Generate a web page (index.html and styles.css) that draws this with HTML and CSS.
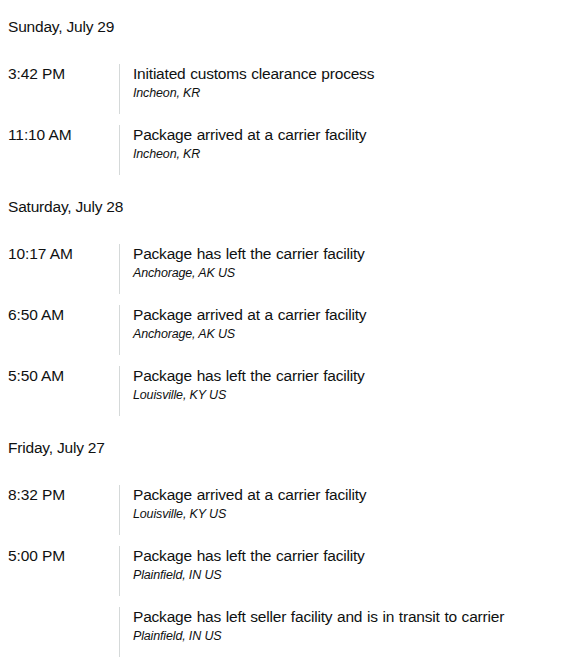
FILE: index.html
```html
<!DOCTYPE html>
<html>
<head>
<meta charset="utf-8">
<link rel="stylesheet" href="styles.css">
</head>
<body>
<div class="tracking">
  <section class="day">
    <h3 class="day-title">Sunday, July 29</h3>
    <div class="events">
      <div class="time">3:42 PM</div>
      <div class="event"><div class="desc">Initiated customs clearance process</div><div class="loc">Incheon, KR</div></div>
      <div class="time">11:10 AM</div>
      <div class="event"><div class="desc">Package arrived at a carrier facility</div><div class="loc">Incheon, KR</div></div>
    </div>
  </section>
  <section class="day">
    <h3 class="day-title">Saturday, July 28</h3>
    <div class="events">
      <div class="time">10:17 AM</div>
      <div class="event"><div class="desc">Package has left the carrier facility</div><div class="loc">Anchorage, AK US</div></div>
      <div class="time">6:50 AM</div>
      <div class="event"><div class="desc">Package arrived at a carrier facility</div><div class="loc">Anchorage, AK US</div></div>
      <div class="time">5:50 AM</div>
      <div class="event"><div class="desc">Package has left the carrier facility</div><div class="loc">Louisville, KY US</div></div>
    </div>
  </section>
  <section class="day">
    <h3 class="day-title">Friday, July 27</h3>
    <div class="events">
      <div class="time">8:32 PM</div>
      <div class="event"><div class="desc">Package arrived at a carrier facility</div><div class="loc">Louisville, KY US</div></div>
      <div class="time">5:00 PM</div>
      <div class="event"><div class="desc">Package has left the carrier facility</div><div class="loc">Plainfield, IN US</div></div>
      <div class="time"></div>
      <div class="event"><div class="desc">Package has left seller facility and is in transit to carrier</div><div class="loc">Plainfield, IN US</div></div>
    </div>
  </section>
</div>
</body>
</html>
```

FILE: styles.css
```css
html, body {
  margin: 0;
  padding: 0;
  background: #ffffff;
}
body {
  font-family: "Liberation Sans", Arial, sans-serif;
  color: #0f1111;
}
.tracking {
  padding: 17px 8px 0 8px;
}
.day {
  margin-bottom: 22px;
}
.day-title {
  margin: 0 0 27px 0;
  font-size: 15.5px;
  letter-spacing: -0.2px;
  font-weight: normal;
  line-height: 20px;
}
.events {
  display: grid;
  grid-template-columns: 111px 1fr;
  row-gap: 11px;
}
.time {
  font-size: 15.5px;
  letter-spacing: -0.1px;
  line-height: 19px;
}
.event {
  border-left: 1px solid #d5d9d9;
  padding-left: 13px;
  height: 50px;
  box-sizing: border-box;
}
.desc {
  font-size: 15.5px;
  letter-spacing: -0.2px;
  word-spacing: 0.6px;
  line-height: 19px;
}
.loc {
  font-size: 12.5px;
  letter-spacing: -0.15px;
  font-style: italic;
  line-height: 20px;
}
```
